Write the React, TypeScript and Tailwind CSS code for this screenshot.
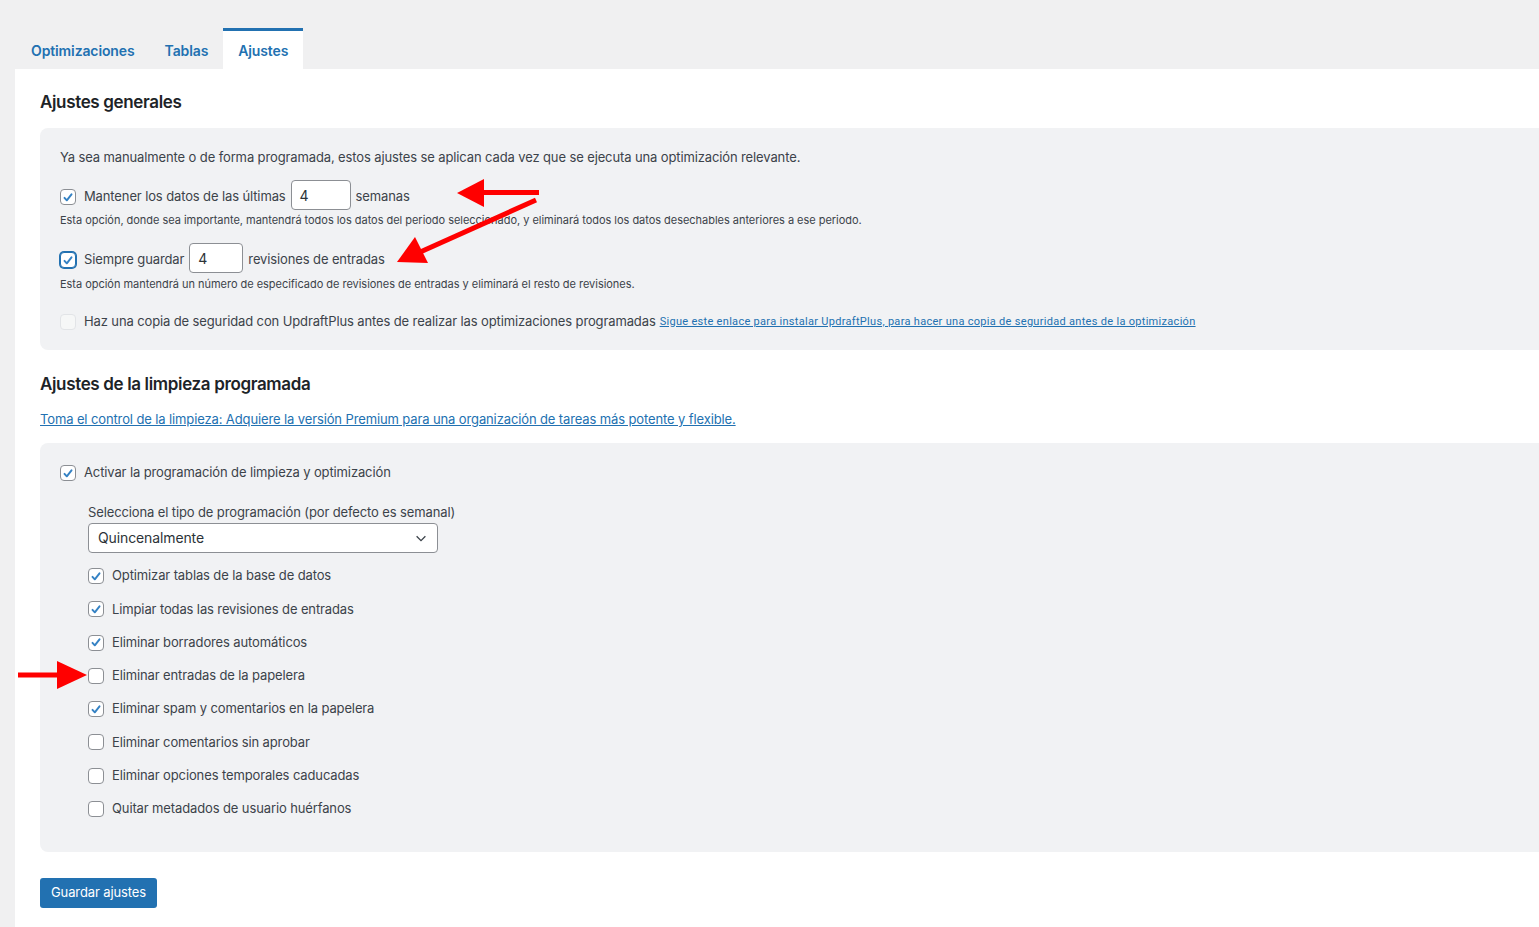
import React from 'react';

const Check = ({ checked, focus, disabled }: { checked?: boolean; focus?: boolean; disabled?: boolean }) => (
  <span
    className={
      'flex h-4 w-4 shrink-0 items-center justify-center rounded-[4px] border ' +
      (disabled
        ? 'border-[#e2e4e7] bg-[#f6f7f7]'
        : focus
          ? 'border-[#2271b1] bg-white shadow-[0_0_0_1px_#2271b1]'
          : 'border-[#8c8f94] bg-white')
    }
  >
    {checked && (
      <svg viewBox="0 0 20 20" className="h-[15px] w-[15px]">
        <path d="M5 10.5l3.3 3.5L15 5.5" fill="none" stroke="#3582c4" strokeWidth="2.8" strokeLinecap="round" strokeLinejoin="round" />
      </svg>
    )}
  </span>
);

const tasks = [
  { label: 'Optimizar tablas de la base de datos', checked: true },
  { label: 'Limpiar todas las revisiones de entradas', checked: true },
  { label: 'Eliminar borradores automáticos', checked: true },
  { label: 'Eliminar entradas de la papelera', checked: false },
  { label: 'Eliminar spam y comentarios en la papelera', checked: true },
  { label: 'Eliminar comentarios sin aprobar', checked: false },
  { label: 'Eliminar opciones temporales caducadas', checked: false },
  { label: 'Quitar metadados de usuario huérfanos', checked: false }
];

// red annotation arrows drawn over the page
const Arrows = () => (
  <svg className="pointer-events-none absolute left-0 top-0" width="1539" height="927" viewBox="0 0 1539 927">
    <g fill="#ff0000" stroke="#ff0000">
      <line x1="539" y1="192.5" x2="478" y2="192.5" strokeWidth="5" />
      <polygon points="457,193 484,179 484,207" stroke="none" />
      <line x1="536" y1="200" x2="418" y2="253" strokeWidth="5" />
      <polygon points="397,262 415,237 428,263" stroke="none" />
      <line x1="18" y1="675" x2="62" y2="675" strokeWidth="5" />
      <polygon points="87,675 57,661 57,689" stroke="none" />
    </g>
  </svg>
);

export default function App() {
  return (
    <div className="relative min-h-[927px] overflow-hidden bg-[#f0f0f1] font-['Inter','Noto_Sans',sans-serif] text-[13px] tracking-[-0.12px] text-[#3c434a]">
      <nav className="flex pl-[16px] pt-[28px]">
        <span className="flex h-[41px] items-center px-[15px] pt-[4px] text-[14px] font-semibold text-[#2271b1]">Optimizaciones</span>
        <span className="flex h-[41px] items-center px-[15px] pt-[4px] text-[14px] font-semibold text-[#2271b1]">Tablas</span>
        <span className="flex h-[41px] items-center border-t-[3px] border-[#2271b1] bg-white px-[15px] pt-[1px] text-[14px] font-semibold text-[#2271b1]">Ajustes</span>
      </nav>

      <main className="ml-[15px] min-h-[858px] bg-white pl-[25px]">
        <h2 className="pt-[21px] text-[17px] font-semibold leading-6 tracking-[-0.35px] text-[#1d2327]">Ajustes generales</h2>

        <section className="mt-[14px] rounded-l-[8px] bg-[#f1f2f4] pb-[18px] pl-[20px] pt-[19px]">
          <p className="leading-5">Ya sea manualmente o de forma programada, estos ajustes se aplican cada vez que se ejecuta una optimización relevante.</p>

          <div className="mt-[13px] flex h-[30px] items-center">
            <span className="mt-[4px] flex items-center">
              <Check checked />
              <span className="ml-2">Mantener los datos de las últimas</span>
            </span>
            <span className="ml-[5px] flex h-[30px] w-[60px] items-center rounded-[4px] border border-[#8c8f94] bg-white pl-[8px] text-[14px] text-[#2c3338]">4</span>
            <span className="ml-[5px] mt-[4px]">semanas</span>
          </div>
          <p className="mt-[2px] text-[11px] leading-4 tracking-[-0.03px]">Esta opción, donde sea importante, mantendrá todos los datos del periodo seleccionado, y eliminará todos los datos desechables anteriores a ese periodo.</p>

          <div className="mt-[15px] flex h-[30px] items-center">
            <span className="mt-[4px] flex items-center">
              <Check checked focus />
              <span className="ml-2">Siempre guardar</span>
            </span>
            <span className="ml-[5px] flex h-[30px] w-[54px] items-center rounded-[4px] border border-[#8c8f94] bg-white pl-[8px] text-[14px] text-[#2c3338]">4</span>
            <span className="ml-[5px] mt-[4px]">revisiones de entradas</span>
          </div>
          <p className="mt-[3px] text-[11px] leading-4 tracking-[-0.03px]">Esta opción mantendrá un número de especificado de revisiones de entradas y eliminará el resto de revisiones.</p>

          <div className="mt-[20px] flex h-5 items-center">
            <Check disabled />
            <span className="ml-2">Haz una copia de seguridad con UpdraftPlus antes de realizar las optimizaciones programadas</span>
            <a className="ml-[4px] font-['Roboto',sans-serif] text-[11px] tracking-[0.3px] text-[#2271b1] underline">Sigue este enlace para instalar UpdraftPlus, para hacer una copia de seguridad antes de la optimización</a>
          </div>
        </section>

        <h2 className="mt-[22px] text-[17px] font-semibold leading-6 tracking-[-0.35px] text-[#1d2327]">Ajustes de la limpieza programada</h2>
        <a className="mt-[13px] block leading-5 text-[#2271b1] underline">Toma el control de la limpieza: Adquiere la versión Premium para una organización de tareas más potente y flexible.</a>

        <section className="mt-[14px] rounded-l-[8px] bg-[#f1f2f4] pb-[33px] pl-[20px] pt-[20px]">
          <div className="flex h-5 items-center">
            <Check checked />
            <span className="ml-2">Activar la programación de limpieza y optimización</span>
          </div>

          <div className="ml-[28px]">
            <p className="mt-[19px] leading-5">Selecciona el tipo de programación (por defecto es semanal)</p>
            <div className="mt-[1px] flex h-[30px] w-[350px] items-center justify-between rounded-[4px] border border-[#8c8f94] bg-white px-[9px] pb-[1px] text-[14px] text-[#2c3338]">
              <span>Quincenalmente</span>
              <svg viewBox="0 0 16 16" className="h-[14px] w-[14px]">
                <path d="M3 6l5 5 5-5" fill="none" stroke="#3c434a" strokeWidth="1.5" />
              </svg>
            </div>

            <div className="mt-[13px] flex flex-col gap-[13.3px]">
              {tasks.map(task => (
                <div key={task.label} className="flex h-5 items-center">
                  <Check checked={task.checked} />
                  <span className="ml-2">{task.label}</span>
                </div>
              ))}
            </div>
          </div>
        </section>

        <button className="mt-[26px] h-[30px] rounded-[3px] bg-[#2271b1] px-[11px] text-[13px] text-white">Guardar ajustes</button>
      </main>

      <Arrows />
    </div>
  );
}
